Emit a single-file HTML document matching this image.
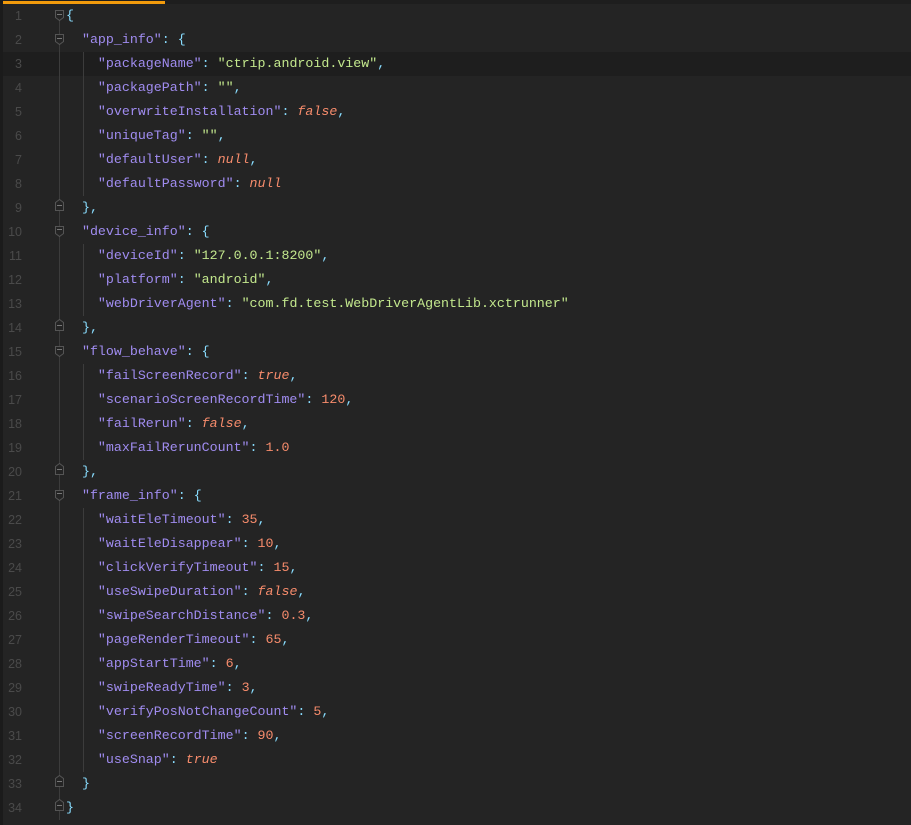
<!DOCTYPE html>
<html><head><meta charset="utf-8"><style>
html,body{margin:0;padding:0}
body{width:911px;height:825px;background:#242424;position:relative;overflow:hidden;font-family:"Liberation Mono",monospace;font-size:13.3px}
.strip{position:absolute;left:0;top:0;width:3px;height:825px;background:#1b1b1b}
.top{position:absolute;left:0;top:0;width:911px;height:4px;background:#1e1e1e}
.bar{position:absolute;left:3px;top:1px;width:162px;height:3px;background:#f29b0c}
.row{position:absolute;left:0;height:24px;line-height:24px;width:911px}
.hl{background:#1e1e1e}
.ln{position:absolute;left:0;width:22px;text-align:right;color:#4a4a4a;font-family:"Liberation Sans",sans-serif;font-size:12.5px}
.code{position:absolute;left:66px;white-space:pre;color:#89ddff}
.k{color:#a08cf0}.s{color:#c3e88d}.n{color:#f78c6c}.b{color:#f78c6c;font-style:italic}
.g{position:absolute;width:1px;background:#3c3c3c}
svg{position:absolute;left:0;top:0}
</style></head><body>
<div class="top"></div><div class="strip"></div><div class="bar"></div>
<div class="row hl" style="top:52px;left:3px"></div>
<div class="g" style="left:59px;top:10px;height:810px"></div>
<div class="g" style="left:83px;top:52px;height:144px"></div>
<div class="g" style="left:83px;top:244px;height:72px"></div>
<div class="g" style="left:83px;top:364px;height:96px"></div>
<div class="g" style="left:83px;top:508px;height:264px"></div>
<svg width="911" height="825">
<g fill="#242424" stroke="#555" stroke-width="1">
<path d="M55.5 10.5h8v7l-4 3l-4-3z"/><path d="M55.5 34.5h8v7l-4 3l-4-3z"/>
<path d="M55.5 202.5l4-3l4 3v8h-8z"/><path d="M55.5 226.5h8v7l-4 3l-4-3z"/>
<path d="M55.5 322.5l4-3l4 3v8h-8z"/><path d="M55.5 346.5h8v7l-4 3l-4-3z"/>
<path d="M55.5 466.5l4-3l4 3v8h-8z"/><path d="M55.5 490.5h8v7l-4 3l-4-3z"/>
<path d="M55.5 778.5l4-3l4 3v8h-8z"/><path d="M55.5 802.5l4-3l4 3v8h-8z"/>
</g>
<g stroke="#777" stroke-width="1">
<path d="M57 14.5h5M57 38.5h5M57 205.5h5M57 229.5h5M57 325.5h5M57 349.5h5M57 469.5h5M57 493.5h5M57 781.5h5M57 805.5h5"/>
</g>
</svg>
<div class="row" style="top:4px"><span class="ln">1</span><span class="code">{</span></div>
<div class="row" style="top:28px"><span class="ln">2</span><span class="code">  <span class="k">"app_info"</span>: {</span></div>
<div class="row" style="top:52px"><span class="ln">3</span><span class="code">    <span class="k">"packageName"</span>: <span class="s">"ctrip.android.view"</span>,</span></div>
<div class="row" style="top:76px"><span class="ln">4</span><span class="code">    <span class="k">"packagePath"</span>: <span class="s">""</span>,</span></div>
<div class="row" style="top:100px"><span class="ln">5</span><span class="code">    <span class="k">"overwriteInstallation"</span>: <span class="b">false</span>,</span></div>
<div class="row" style="top:124px"><span class="ln">6</span><span class="code">    <span class="k">"uniqueTag"</span>: <span class="s">""</span>,</span></div>
<div class="row" style="top:148px"><span class="ln">7</span><span class="code">    <span class="k">"defaultUser"</span>: <span class="b">null</span>,</span></div>
<div class="row" style="top:172px"><span class="ln">8</span><span class="code">    <span class="k">"defaultPassword"</span>: <span class="b">null</span></span></div>
<div class="row" style="top:196px"><span class="ln">9</span><span class="code">  },</span></div>
<div class="row" style="top:220px"><span class="ln">10</span><span class="code">  <span class="k">"device_info"</span>: {</span></div>
<div class="row" style="top:244px"><span class="ln">11</span><span class="code">    <span class="k">"deviceId"</span>: <span class="s">"127.0.0.1:8200"</span>,</span></div>
<div class="row" style="top:268px"><span class="ln">12</span><span class="code">    <span class="k">"platform"</span>: <span class="s">"android"</span>,</span></div>
<div class="row" style="top:292px"><span class="ln">13</span><span class="code">    <span class="k">"webDriverAgent"</span>: <span class="s">"com.fd.test.WebDriverAgentLib.xctrunner"</span></span></div>
<div class="row" style="top:316px"><span class="ln">14</span><span class="code">  },</span></div>
<div class="row" style="top:340px"><span class="ln">15</span><span class="code">  <span class="k">"flow_behave"</span>: {</span></div>
<div class="row" style="top:364px"><span class="ln">16</span><span class="code">    <span class="k">"failScreenRecord"</span>: <span class="b">true</span>,</span></div>
<div class="row" style="top:388px"><span class="ln">17</span><span class="code">    <span class="k">"scenarioScreenRecordTime"</span>: <span class="n">120</span>,</span></div>
<div class="row" style="top:412px"><span class="ln">18</span><span class="code">    <span class="k">"failRerun"</span>: <span class="b">false</span>,</span></div>
<div class="row" style="top:436px"><span class="ln">19</span><span class="code">    <span class="k">"maxFailRerunCount"</span>: <span class="n">1.0</span></span></div>
<div class="row" style="top:460px"><span class="ln">20</span><span class="code">  },</span></div>
<div class="row" style="top:484px"><span class="ln">21</span><span class="code">  <span class="k">"frame_info"</span>: {</span></div>
<div class="row" style="top:508px"><span class="ln">22</span><span class="code">    <span class="k">"waitEleTimeout"</span>: <span class="n">35</span>,</span></div>
<div class="row" style="top:532px"><span class="ln">23</span><span class="code">    <span class="k">"waitEleDisappear"</span>: <span class="n">10</span>,</span></div>
<div class="row" style="top:556px"><span class="ln">24</span><span class="code">    <span class="k">"clickVerifyTimeout"</span>: <span class="n">15</span>,</span></div>
<div class="row" style="top:580px"><span class="ln">25</span><span class="code">    <span class="k">"useSwipeDuration"</span>: <span class="b">false</span>,</span></div>
<div class="row" style="top:604px"><span class="ln">26</span><span class="code">    <span class="k">"swipeSearchDistance"</span>: <span class="n">0.3</span>,</span></div>
<div class="row" style="top:628px"><span class="ln">27</span><span class="code">    <span class="k">"pageRenderTimeout"</span>: <span class="n">65</span>,</span></div>
<div class="row" style="top:652px"><span class="ln">28</span><span class="code">    <span class="k">"appStartTime"</span>: <span class="n">6</span>,</span></div>
<div class="row" style="top:676px"><span class="ln">29</span><span class="code">    <span class="k">"swipeReadyTime"</span>: <span class="n">3</span>,</span></div>
<div class="row" style="top:700px"><span class="ln">30</span><span class="code">    <span class="k">"verifyPosNotChangeCount"</span>: <span class="n">5</span>,</span></div>
<div class="row" style="top:724px"><span class="ln">31</span><span class="code">    <span class="k">"screenRecordTime"</span>: <span class="n">90</span>,</span></div>
<div class="row" style="top:748px"><span class="ln">32</span><span class="code">    <span class="k">"useSnap"</span>: <span class="b">true</span></span></div>
<div class="row" style="top:772px"><span class="ln">33</span><span class="code">  }</span></div>
<div class="row" style="top:796px"><span class="ln">34</span><span class="code">}</span></div>
</body></html>
